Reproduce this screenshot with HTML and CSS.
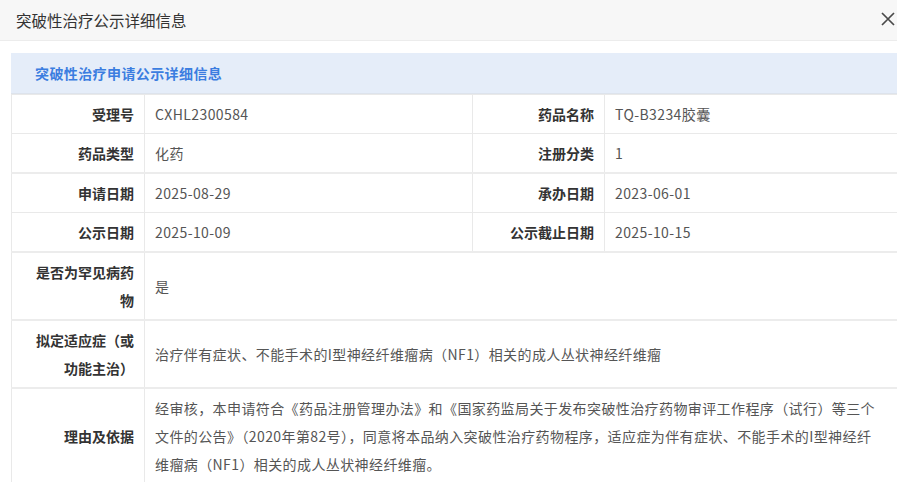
FILE: index.html
```html
<!DOCTYPE html>
<html lang="zh-CN">
<head>
    <meta charset="UTF-8">
    <meta name="viewport" content="width=device-width, initial-scale=1.0">
    <title>突破性治疗公示详细信息</title>
    <link rel="stylesheet" href="styles.css">
</head>
<body>
    <div class="dialog">
        <div class="dialog-header">
            <span class="dialog-title">突破性治疗公示详细信息</span>
            <span class="dialog-close">
                <svg width="14" height="14" viewBox="0 0 14 14">
                    <path d="M1 1 L13 13 M13 1 L1 13" stroke="#4a4a4a" stroke-width="1.7" fill="none"/>
                </svg>
            </span>
        </div>
        <div class="panel">
            <div class="panel-title">突破性治疗申请公示详细信息</div>
            <table class="info-table">
                <colgroup>
                    <col class="col-label">
                    <col class="col-value">
                    <col class="col-label2">
                    <col>
                </colgroup>
                <tr>
                    <th>受理号</th>
                    <td>CXHL2300584</td>
                    <th>药品名称</th>
                    <td>TQ-B3234胶囊</td>
                </tr>
                <tr class="group-end">
                    <th>药品类型</th>
                    <td>化药</td>
                    <th>注册分类</th>
                    <td>1</td>
                </tr>
                <tr>
                    <th>申请日期</th>
                    <td>2025-08-29</td>
                    <th>承办日期</th>
                    <td>2023-06-01</td>
                </tr>
                <tr class="group-end">
                    <th>公示日期</th>
                    <td>2025-10-09</td>
                    <th>公示截止日期</th>
                    <td>2025-10-15</td>
                </tr>
                <tr class="group-end">
                    <th>是否为罕见病药物</th>
                    <td colspan="3">是</td>
                </tr>
                <tr class="group-end">
                    <th>拟定适应症（或功能主治）</th>
                    <td colspan="3">治疗伴有症状、不能手术的I型神经纤维瘤病（NF1）相关的成人丛状神经纤维瘤</td>
                </tr>
                <tr>
                    <th>理由及依据</th>
                    <td colspan="3" class="long-text">经审核，本申请符合《药品注册管理办法》和《国家药监局关于发布突破性治疗药物审评工作程序（试行）等三个文件的公告》（2020年第82号），同意将本品纳入突破性治疗药物程序，适应症为伴有症状、不能手术的I型神经纤维瘤病（NF1）相关的成人丛状神经纤维瘤。</td>
                </tr>
            </table>
        </div>
    </div>
</body>
</html>
```

FILE: styles.css
```css
body {
    margin: 0;
    overflow: hidden;
    font-family: "Noto Sans CJK SC", sans-serif;
    color: #333;
    background: #fff;
}
.dialog {
    width: 897px;
}
.dialog-header {
    height: 40px;
    display: flex;
    align-items: center;
    justify-content: space-between;
    padding: 0 2px 0 16px;
    background: #f7f7f7;
    border-bottom: 1px solid #ececec;
}
.dialog-title {
    font-size: 15.5px;
    color: #333;
}
.dialog-close {
    display: flex;
    margin-top: -2px;
}
.panel {
    margin: 12px 0 0 11px;
    width: 892px;
}
.panel-title {
    height: 40px;
    line-height: 40px;
    padding-left: 24px;
    background: #e5edf9;
    color: #3b7de0;
    font-size: 14px;
    font-weight: bold;
    letter-spacing: 0.4px;
    border-bottom: 1px solid #dde3ec;
}
.info-table {
    width: 100%;
    border-collapse: collapse;
    table-layout: fixed;
    font-size: 14px;
    line-height: 28px;
}
.col-label {
    width: 133px;
}
.col-value {
    width: 328px;
}
.col-label2 {
    width: 132px;
}
.info-table th,
.info-table td {
    border: 1px solid #e9e9e9;
    padding: 5px 10px;
    vertical-align: middle;
}
.info-table th {
    text-align: right;
    font-weight: bold;
    color: #333;
    padding-left: 20px;
}
.info-table td {
    text-align: left;
    color: #555;
    letter-spacing: 0.4px;
}
.info-table tr.group-end th,
.info-table tr.group-end td {
    border-bottom: 2px solid #ececec;
}
.info-table td.long-text {
    padding-right: 18px;
}
```
